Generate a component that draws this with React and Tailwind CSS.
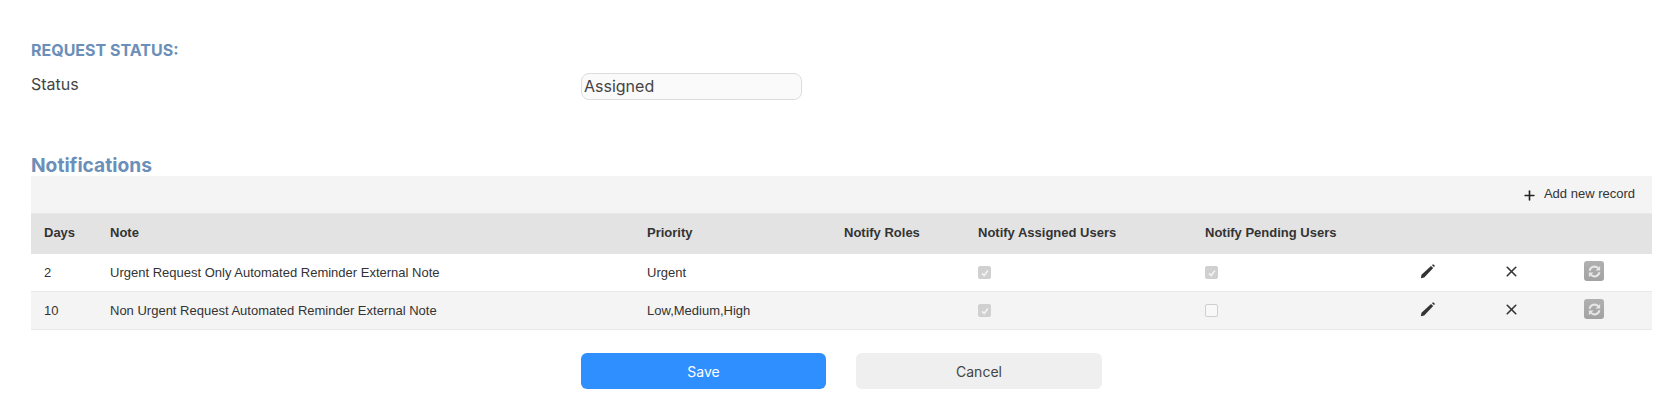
import { Plus, X } from "lucide-react";

const rows = [
  { days: "2", note: "Urgent Request Only Automated Reminder External Note", priority: "Urgent", assigned: true, pending: true },
  { days: "10", note: "Non Urgent Request Automated Reminder External Note", priority: "Low,Medium,High", assigned: true, pending: false },
];

const columns = "grid grid-cols-[66px_537px_197px_134px_227px_208px_83px_83px_1fr] items-center";

function Check({ checked }) {
  return (
    <span className={`flex h-[13px] w-[13px] items-center justify-center rounded-[2px] border ${checked ? "border-[#d0d0d0] bg-[#d0d0d0]" : "border-[#cfcfcf] bg-[#f8f8f8]"}`}>
      {checked && (
        <svg viewBox="0 0 12 12" className="h-[10px] w-[10px]">
          <path d="M2.5 6.5 5 9l4.5-6" fill="none" stroke="#f2f2f2" strokeWidth="2" />
        </svg>
      )}
    </span>
  );
}

function PencilIcon() {
  return (
    <svg viewBox="0 0 16 16" className="h-4 w-4" fill="#333">
      <path d="M.8 15.2l.7-3.4L11 2.9l2.2 2.2-9 9.4z" />
      <path d="M12 2.2l.9-.9.6.1 1.2 1.2.1.6-.9.9z" />
    </svg>
  );
}

function SyncIcon() {
  return (
    <svg viewBox="0 0 16 16" className="h-[15px] w-[15px]" fill="none" stroke="#e6e6e6" strokeWidth="2.2">
      <path d="M2.8 7.2A5.3 5.3 0 0 1 12 4.6" />
      <path d="M13.2 8.8A5.3 5.3 0 0 1 4 11.4" />
      <path d="M14 2v5H9z" fill="#e6e6e6" stroke="none" />
      <path d="M2 14V9h5z" fill="#e6e6e6" stroke="none" />
    </svg>
  );
}

function Row({ row, striped }) {
  return (
    <div className={`${columns} h-[38px] border-b border-[#e8e8e8] font-['Liberation_Sans',sans-serif] text-[13px] text-[#333] ${striped ? "bg-[#f4f4f4]" : "bg-white"}`}>
      <div className="pl-[13px]">{row.days}</div>
      <div className="pl-[13px]">{row.note}</div>
      <div className="pl-[13px]">{row.priority}</div>
      <div />
      <div className="pl-[13px]"><Check checked={row.assigned} /></div>
      <div className="pl-[13px]"><Check checked={row.pending} /></div>
      <div className="-mt-[3px] pl-[20px]"><PencilIcon /></div>
      <div className="-mt-[3px] pl-[20px]"><X size={17} stroke="#333" strokeWidth={2.3} /></div>
      <div className="-mt-[3px] pl-[18px]">
        <span className="flex h-5 w-5 items-center justify-center rounded-[3px] bg-linear-to-b from-[#b0b0b0] to-[#a2a2a2]">
          <SyncIcon />
        </span>
      </div>
    </div>
  );
}

export default function App() {
  return (
    <div className="h-[417px] bg-white pl-[31px] pr-[11px] pt-[41px] font-['Inter',sans-serif] text-[#444]">
      <h2 className="text-[16px] font-bold leading-[19px] text-[#6b8fb8]">REQUEST STATUS:</h2>
      <div className="mt-[13px] flex items-start">
        <label className="w-[550px] pt-[1px] text-[16px] leading-[20px]">Status</label>
        <div className="flex h-[27px] w-[221px] items-center rounded-[8px] border border-[#dddddd] bg-[#fafafa] pb-[1px] pl-[2px] text-[16px]">Assigned</div>
      </div>
      <h2 className="mt-[55px] text-[19.2px] font-bold leading-[21px] text-[#6b8fb8]">Notifications</h2>
      <div className="flex h-[38px] items-center justify-end gap-[7px] border-b border-[#e8e8e8] bg-[#f4f4f4] pb-[1px] pr-[17px] font-['Liberation_Sans',sans-serif] text-[13px] text-[#333]">
        <Plus size={15} stroke="#222" strokeWidth={2.6} className="mt-[3px]" />
        <span>Add new record</span>
      </div>
      <div className={`${columns} h-[40px] bg-[#e3e3e3] pb-[2px] font-['Liberation_Sans',sans-serif] text-[13px] font-bold text-[#333]`}>
        <div className="pl-[13px]">Days</div>
        <div className="pl-[13px]">Note</div>
        <div className="pl-[13px]">Priority</div>
        <div className="pl-[13px]">Notify Roles</div>
        <div className="pl-[13px]">Notify Assigned Users</div>
        <div className="pl-[13px]">Notify Pending Users</div>
      </div>
      {rows.map((row, i) => (
        <Row key={row.days} row={row} striped={i === 1} />
      ))}
      <div className="mt-[23px] flex gap-[30px] pl-[550px] text-[14px]">
        <button className="h-[36px] w-[245px] rounded-[6px] bg-[#2f8fff] text-white">Save</button>
        <button className="h-[36px] w-[246px] rounded-[6px] bg-[#efefef] text-[#444]">Cancel</button>
      </div>
    </div>
  );
}
